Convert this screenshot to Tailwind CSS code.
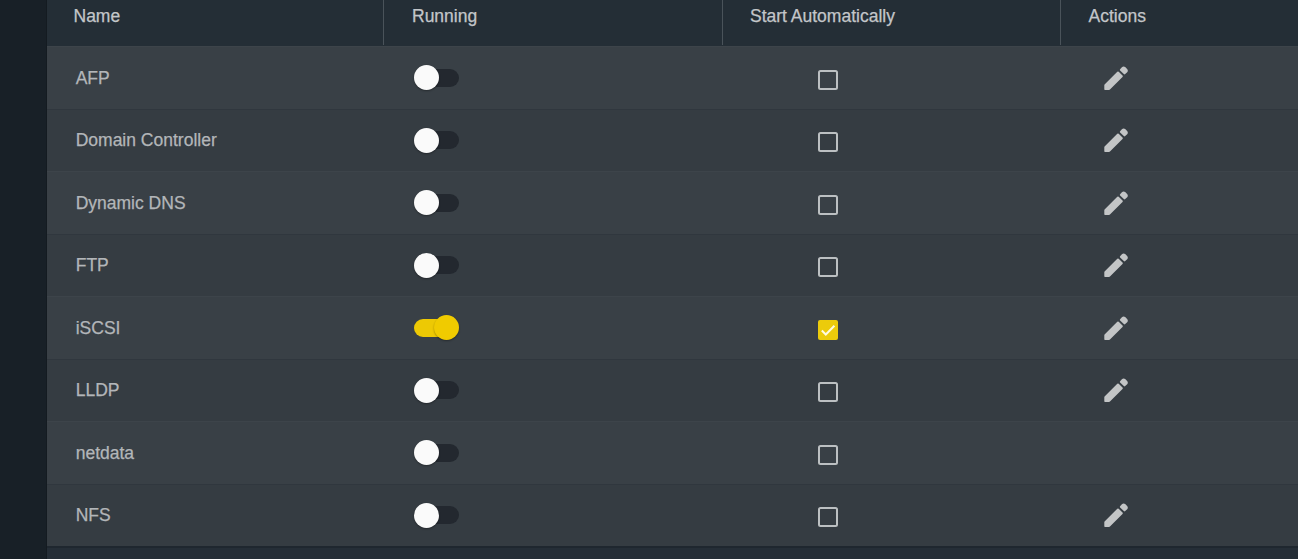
<!DOCTYPE html>
<html lang="en">
<head>
<meta charset="utf-8">
<title>Services</title>
<script src="https://cdn.jsdelivr.net/npm/@tailwindcss/browser@4"></script>
</head>
<body class="flex h-[559px] overflow-hidden bg-[#242e36] font-['Liberation_Sans',Arial,sans-serif] text-[17.5px] leading-5 text-[#b3b6b9] [-webkit-text-stroke:0.25px_currentColor]">
<aside class="w-[47px] shrink-0 border-r border-[#141b21] bg-[#182027]"></aside>
<main class="grow">
  <header class="grid h-[46px] grid-cols-[337px_339px_338px_1fr] text-[#c3c6c9]">
    <div class="mb-px border-r border-[#4a535a] pt-[6px] pl-[26.5px]">Name</div>
    <div class="mb-px border-r border-[#4a535a] pt-[6px] pl-[28px]">Running</div>
    <div class="mb-px border-r border-[#4a535a] pt-[6px] pl-[27px]">Start Automatically</div>
    <div class="pt-[6px] pl-[27.5px]">Actions</div>
  </header>
  <section id="rows"></section>
  <footer class="h-[13px] border-t-2 border-[#1f272f] bg-[#252e37]"></footer>
</main>
<script>
const services = [['AFP'],['Domain Controller'],['Dynamic DNS'],['FTP'],['iSCSI',true],['LLDP'],['netdata',false,true],['NFS']];
const toggleOff = `<div class="flex h-[25px] w-[45px] items-center"><div class="z-10 h-[25px] w-[25px] shrink-0 rounded-full bg-[#fafafa] shadow-[0_1px_2px_#0005]"></div><div class="-ml-[12px] h-[18px] w-[32px] rounded-r-full bg-[#23282f]"></div></div>`;
const toggleOn = `<div class="flex h-[25px] w-[45px] items-center"><div class="h-[18px] w-[32px] shrink-0 rounded-l-full bg-[#edc904]"></div><div class="-ml-[12px] h-[25px] w-[25px] shrink-0 rounded-full bg-[#f0cb00] shadow-[0_1px_2px_#0005]"></div></div>`;
const boxOff = `<div class="h-5 w-5 rounded-[2.5px] border-2 border-[#bcc0c2]"></div>`;
const boxOn = `<div class="h-5 w-5 rounded-[2px] bg-[#eccb0b]"><svg class="h-5 w-5" viewBox="0 0 20 20" fill="none" stroke="#fffbe0" stroke-width="2"><path d="M3.8 10.5 7.8 14.5 16.4 5.8"/></svg></div>`;
const pencil = `<svg class="h-6 w-6" viewBox="0 0 24 24" fill="#c3c5c6"><path d="M0.3 23.2V19.2Q0.3 18.7 0.8 18.2L13.3 5.8Q14 5.1 14.7 5.8L18.5 9.6Q19.2 10.3 18.5 11L6.2 23.3Q5.6 23.9 5 23.9H1Q0.3 23.9 0.3 23.2ZM16.1 3.3 17.9 1.2Q19.5-0.1 21.2 1.1L23.1 3Q24.5 4.7 23.2 6.3L21.2 8.1Q20.5 8.7 19.8 8L16.1 4.5Q15.6 3.9 16.1 3.3Z"/></svg>`;
document.getElementById('rows').innerHTML = services.map(([name,on,noEdit],i) => `
<div class="grid h-[62.5px] grid-cols-[337px_339px_338px_1fr] items-center border-t ${i%2 ? 'border-[#30373e] bg-[#353c42]' : 'border-[#3d444a] bg-[#394046]'}">
<div class="pl-[28.7px] pt-[0.3px]">${name}</div><div class="pl-[30px]">${on?toggleOn:toggleOff}</div><div class="pl-[95px] pt-[4.4px]">${on?boxOn:boxOff}</div><div class="pl-[43px]">${noEdit?'':pencil}</div></div>`).join('');
</script>
</body>
</html>
